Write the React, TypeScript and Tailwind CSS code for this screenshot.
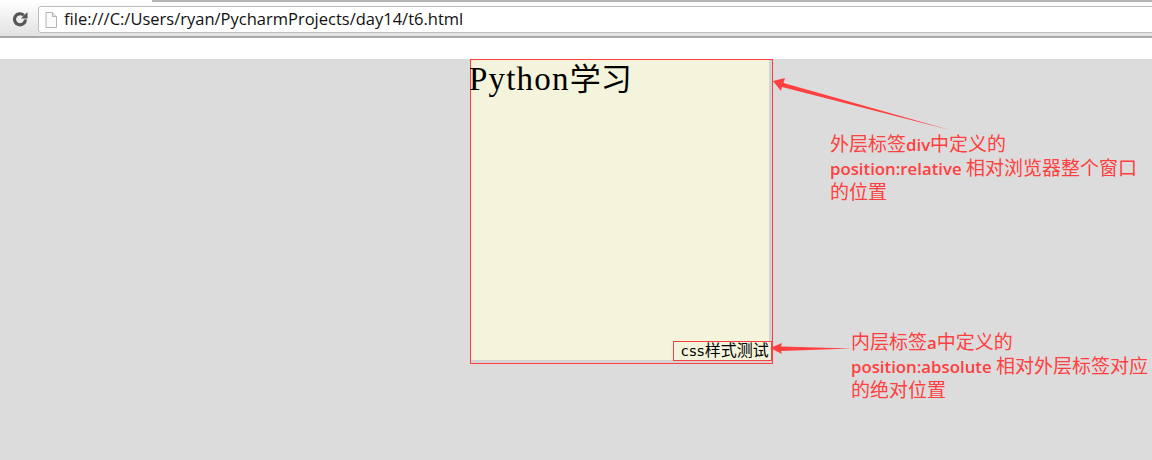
import React from "react";

const Annotation: React.FC<{ lines: [string, string, string][]; className: string }> = ({ lines, className }) => (
  <div className={`text-[19px] leading-6 text-[#ff4040] whitespace-nowrap font-['Noto_Sans_CJK_SC',sans-serif] ${className}`}>
    {lines.map(([before, latin, after]) => (
      <div key={before + latin + after} className="h-6 overflow-visible">
        {before}
        <span className="text-[16.8px] leading-none font-semibold font-['Open_Sans','Noto_Sans_CJK_SC',sans-serif]">{latin}</span>
        {after}
      </div>
    ))}
  </div>
);

export default function App() {
  return (
    <div className="w-[1152px] h-[460px] overflow-hidden bg-white relative">
      {/* browser toolbar */}
      <div className="relative h-[38px] flex items-start bg-gradient-to-b from-white to-[#e2e2e2] border-b-2 border-[#a8a8a8]">
        <div className="absolute left-[152px] right-0 top-0 h-[2px] bg-[#b4b4b4]" />
        <svg width="18" height="18" viewBox="0 0 18 18" className="ml-[11px] mt-[10px] shrink-0">
          <path d="M14.5 9.5a5.5 5.5 0 1 1-1.7-4.2" fill="none" stroke="#555" strokeWidth="3.2" />
          <path d="M16.5 2v6.5H10z" fill="#555" />
        </svg>
        <div className="ml-[9px] mt-[6px] flex-1 -mr-1 h-[27px] flex items-center bg-white border border-[#bcbcbc] rounded-[3px]">
          <svg width="12" height="16" viewBox="0 0 12 16" className="ml-[6px] shrink-0">
            <path d="M1 .5h6.5l4 4v11H1z" fill="#fafafa" stroke="#b4b4b4" />
            <path d="M7.5.5v4h4" fill="#e8e8e8" stroke="#b4b4b4" />
          </svg>
          <span className="ml-[7px] text-[16.5px] leading-none text-[#111] font-['Open_Sans',sans-serif]">
            file:///C:/Users/ryan/PycharmProjects/day14/t6.html
          </span>
        </div>
      </div>
      {/* bookmarks strip, empty */}
      <div className="h-[21px] bg-white" />
      {/* page */}
      <div className="h-[401px] bg-[#dcdcdc] flex items-start">
        <div className="relative ml-[470px] w-[303px] h-[305px] shrink-0 border border-[#ff4040] bg-[#d4d4d4]">
          <div className="h-[300px] w-[298px] bg-[#f4f4dc] text-[33px] leading-[38px] text-black whitespace-nowrap font-['Liberation_Serif','Noto_Sans_CJK_SC',serif]">
            <span className="tracking-[1.2px] -ml-[2px]">Python</span>
            <span className="text-[31px]">学习</span>
          </div>
          <a className="absolute right-0 bottom-[2px] w-[99px] h-[20px] border border-[#ff4040] bg-[#f4f4dc] text-[16px] leading-[15px] text-black pl-[7px] whitespace-nowrap font-['Noto_Sans_CJK_SC',sans-serif]">
            <span className="text-[14px] font-['DejaVu_Sans',sans-serif] tracking-[0.5px]">css</span>样式测试
          </a>
        </div>
        <div className="flex flex-col">
          <Annotation
            className="ml-[57px] mt-[72px]"
            lines={[
              ["外层标签", "div", "中定义的"],
              ["", "position:relative ", "相对浏览器整个窗口"],
              ["的位置", "", ""],
            ]}
          />
          <Annotation
            className="ml-[78px] mt-[126px]"
            lines={[
              ["内层标签", "a", "中定义的"],
              ["", "position:absolute ", "相对外层标签对应"],
              ["的绝对位置", "", ""],
            ]}
          />
        </div>
      </div>
      {/* red arrows drawn over the shot */}
      <svg className="absolute left-0 top-0 pointer-events-none" width="1152" height="460">
        <path d="M773 81 L785 78 L783.5 83 L950 130 L782 87 L781 91 Z" fill="#ff4040" />
        <path d="M770 348 L782 343 L781 346.5 L852 348.5 L781 351 L782 354 Z" fill="#ff4040" />
      </svg>
    </div>
  );
}
